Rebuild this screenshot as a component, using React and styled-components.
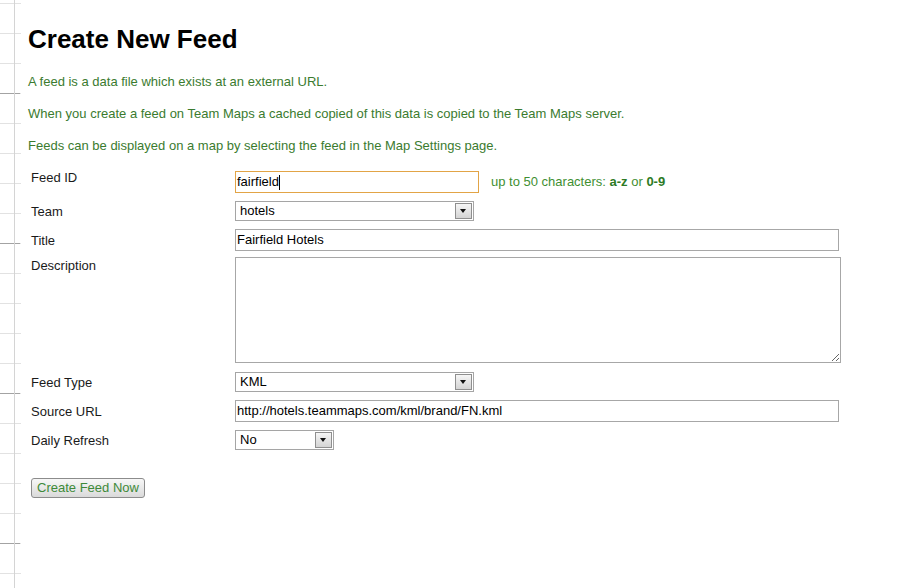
import React from 'react'
import styled, { createGlobalStyle } from 'styled-components'

const Global = createGlobalStyle`
  html, body {
    margin: 0;
    padding: 0;
    background: #fff;
  }
  body {
    font-family: "Liberation Sans", Arial, sans-serif;
    font-size: 13px;
    color: #1a1a1a;
  }
`

const Page = styled.div`
  display: flex;
  min-height: 100vh;
`

const Ruler = styled.div`
  flex: 0 0 21px;
  background:
    linear-gradient(#d4d4d4, #d4d4d4) 14px 0 / 1px 100% no-repeat,
    linear-gradient(#a3a3a3 0 1px, transparent 1px) 0 93px / 20px 150px repeat-y,
    linear-gradient(#e2e2e2 0 1px, transparent 1px) 0 3px / 21px 30px repeat-y;
`

const Main = styled.div`
  flex: 1;
  padding: 24px 0 40px 7px;
`

const Title = styled.h1`
  margin: 0 0 20px;
  font-size: 26px;
  line-height: 30px;
  font-weight: bold;
  color: #000;
`

const Intro = styled.div`
  display: flex;
  flex-direction: column;
  gap: 16px;
`

const Para = styled.p`
  margin: 0;
  line-height: 16px;
  color: #3b7b2f;
`

const Form = styled.div`
  display: grid;
  grid-template-columns: 207px auto;
  grid-template-rows: 34px 29px 25px 117px 29px 29px;
  align-items: start;
  margin-top: 13px;
`

const Label = styled.div`
  padding: 3px 0 0 3px;
  line-height: 16px;
  color: #1a1a1a;
`

const Field = styled.div`
  display: flex;
  align-items: center;
  margin-top: ${p => p.$top || 0}px;
`

const TextBox = styled.div`
  box-sizing: border-box;
  display: flex;
  align-items: center;
  width: ${p => p.$w}px;
  height: 22px;
  padding: 0 1px;
  border: 1px solid ${p => (p.$focus ? '#e2a446' : '#a7a7a7')};
  background: #fff;
  line-height: 16px;
  color: #000;
  white-space: nowrap;
  overflow: hidden;
`

const Caret = styled.span`
  display: inline-block;
  width: 1px;
  height: 15px;
  background: #000;
`

const Hint = styled.span`
  margin-left: 12px;
  color: #3f8f32;
  line-height: 16px;
  b {
    color: #2d7a24;
  }
`

const SelectBox = styled.div`
  box-sizing: border-box;
  display: flex;
  align-items: center;
  justify-content: space-between;
  width: ${p => p.$w}px;
  height: 20px;
  padding-left: 4px;
  border: 1px solid #a5a5a5;
  background: #fff;
  line-height: 16px;
  color: #000;
`

const ArrowBtn = styled.span`
  box-sizing: border-box;
  position: relative;
  width: 17px;
  height: 16px;
  margin-right: 1px;
  border: 1px solid #8f8f8f;
  background: linear-gradient(#f6f6f6, #d4d4d4);
  &::after {
    content: '';
    position: absolute;
    left: 4px;
    top: 5px;
    border-left: 3.5px solid transparent;
    border-right: 3.5px solid transparent;
    border-top: 4px solid #111;
  }
`

const Area = styled.textarea`
  box-sizing: border-box;
  display: block;
  width: 606px;
  height: 106px;
  margin: 2px 0 0;
  border: 1px solid #a7a7a7;
  font: inherit;
  resize: both;
  outline: none;
`

const Button = styled.button`
  box-sizing: border-box;
  display: block;
  width: 114px;
  height: 20px;
  margin: 28px 0 0 3px;
  padding: 0;
  border: 1px solid #8c8c8c;
  border-radius: 3px;
  background: linear-gradient(#f7f7f7, #dadada);
  font-family: "Liberation Sans", Arial, sans-serif;
  font-size: 13px;
  line-height: 16px;
  color: #3e8a3a;
`

const Select = ({ w, children }) => (
  <SelectBox $w={w}>
    <span>{children}</span>
    <ArrowBtn />
  </SelectBox>
)

export default function App() {
  return (
    <Page>
      <Global />
      <Ruler />
      <Main>
        <Title>Create New Feed</Title>
        <Intro>
          <Para>A feed is a data file which exists at an external URL.</Para>
          <Para>When you create a feed on Team Maps a cached copied of this data is copied to the Team Maps server.</Para>
          <Para>Feeds can be displayed on a map by selecting the feed in the Map Settings page.</Para>
        </Intro>
        <Form>
          <Label>Feed ID</Label>
          <Field $top={4}>
            <TextBox $w={244} $focus>fairfield<Caret /></TextBox>
            <Hint>up to 50 characters: <b>a-z</b> or <b>0-9</b></Hint>
          </Field>

          <Label>Team</Label>
          <Field><Select w={239}>hotels</Select></Field>

          <Label>Title</Label>
          <Field $top={-1}><TextBox $w={604}>Fairfield Hotels</TextBox></Field>

          <Label>Description</Label>
          <Field><Area /></Field>

          <Label>Feed Type</Label>
          <Field><Select w={239}>KML</Select></Field>

          <Label>Source URL</Label>
          <Field $top={-1}><TextBox $w={604}>http://hotels.teammaps.com/kml/brand/FN.kml</TextBox></Field>

          <Label>Daily Refresh</Label>
          <Field><Select w={99}>No</Select></Field>
        </Form>
        <Button>Create Feed Now</Button>
      </Main>
    </Page>
  )
}
